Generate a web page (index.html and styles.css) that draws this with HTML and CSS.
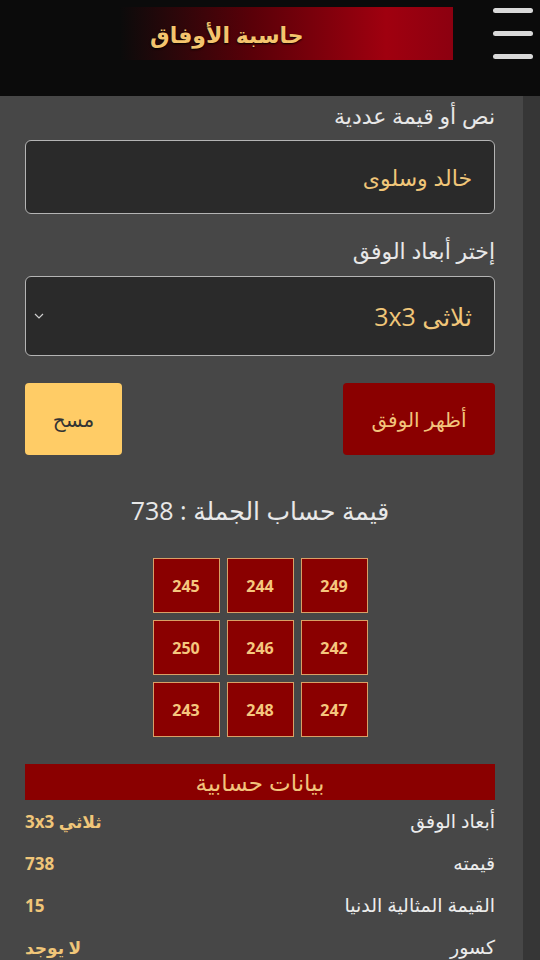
FILE: index.html
```html
<!DOCTYPE html>
<html lang="ar" dir="rtl">
<head>
<meta charset="utf-8">
<title>حاسبة الأوفاق</title>
<link rel="stylesheet" href="styles.css">
</head>
<body>
<header class="topbar">
  <div class="menu">
    <span class="bar"></span>
    <span class="bar"></span>
    <span class="bar"></span>
  </div>
  <div class="banner"><h1 class="title">حاسبة الأوفاق</h1></div>
</header>
<div class="page">
  <div class="track"></div>
  <main class="content">
    <label class="label">نص أو قيمة عددية</label>
    <div class="field">خالد وسلوى</div>
    <label class="label label-2">إختر أبعاد الوفق</label>
    <div class="field select">
      <span>ثلاثى 3x3</span>
      <svg class="chev" width="10" height="6" viewBox="0 0 10 6"><path d="M1 1 L5 5 L9 1" fill="none" stroke="#cfcfcf" stroke-width="1.2"/></svg>
    </div>
    <div class="actions">
      <button class="btn btn-show">أظهر الوفق</button>
      <button class="btn btn-clear">مسح</button>
    </div>
    <p class="sum">قيمة حساب الجملة : 738</p>
    <div class="grid">
      <div class="cell">249</div><div class="cell">244</div><div class="cell">245</div>
      <div class="cell">242</div><div class="cell">246</div><div class="cell">250</div>
      <div class="cell">247</div><div class="cell">248</div><div class="cell">243</div>
    </div>
    <h2 class="section">بيانات حسابية</h2>
    <div class="row"><span class="k">أبعاد الوفق</span><span class="v">ثلاثي 3x3</span></div>
    <div class="row"><span class="k">قيمته</span><span class="v">738</span></div>
    <div class="row"><span class="k">القيمة المثالية الدنيا</span><span class="v">15</span></div>
    <div class="row"><span class="k">كسور</span><span class="v">لا يوجد</span></div>
  </main>
</div>
</body>
</html>
```
FILE: styles.css
```css
* { box-sizing: border-box; }
html, body { margin: 0; padding: 0; }
body {
  background: #474747;
  font-family: "Open Sans", "DejaVu Sans", sans-serif;
  color: #e6e6e6;
  overflow: hidden;
}
.topbar {
  height: 96px;
  background: #0b0b0b;
  display: flex;
  align-items: flex-start;
  padding-top: 7px;
}
.menu {
  width: 40px;
  margin-right: 7px;
  margin-left: 40px;
  display: flex;
  flex-direction: column;
  gap: 18px;
  padding-top: 1px;
}
.bar {
  display: block;
  height: 5px;
  border-radius: 3px;
  background: #d9d9d9;
}
.banner {
  width: 333px;
  height: 53px;
  background: linear-gradient(to left, #8c0010 0%, #a0000f 20%, #5a0008 60%, #0b0b0b 100%);
  display: flex;
  align-items: center;
  justify-content: flex-end;
  padding-left: 30px;
}
.title {
  margin: 0;
  font-size: 22px;
  font-weight: bold;
  color: #f4c46e;
  text-shadow: 0 1px 2px #000;
}
.page {
  display: flex;
  min-height: 864px;
}
.track {
  width: 17px;
  background: #363636;
  flex: none;
}
.content {
  flex: 1;
  padding: 6px 28px 0 25px;
}
.label {
  display: block;
  font-size: 22px;
  line-height: 26px;
  color: #e8e8e8;
}
.label-2 { margin-top: 23px; }
.field {
  margin-top: 12px;
  height: 74px;
  background: #2a2a2a;
  border: 1px solid #b4b4b4;
  border-radius: 6px;
  display: flex;
  align-items: center;
  padding: 0 22px;
  font-size: 22px;
  color: #f0c679;
}
.select {
  margin-top: 13px;
  height: 80px;
  justify-content: space-between;
  padding-left: 8px;
  font-size: 25px;
}
.chev { flex: none; }
.actions {
  margin-top: 27px;
  display: flex;
  justify-content: space-between;
}
.btn {
  height: 72px;
  border: none;
  border-radius: 4px;
  font-family: inherit;
  font-size: 20px;
}
.btn-show {
  width: 152px;
  background: #8a0000;
  color: #f2c47c;
}
.btn-clear {
  width: 97px;
  background: #ffcc66;
  color: #333;
}
.sum {
  margin: 40px 0 0;
  text-align: center;
  font-size: 25px;
  line-height: 30px;
  color: #e8e8e8;
}
.grid {
  margin: 33px auto 0;
  display: grid;
  grid-template-columns: repeat(3, 67px);
  grid-auto-rows: 55px;
  gap: 7px;
  width: max-content;
}
.cell {
  background: #8a0000;
  border: 1px solid #d9a066;
  display: flex;
  align-items: center;
  justify-content: center;
  font-weight: bold;
  font-size: 16px;
  color: #f5c77e;
}
.section {
  margin: 27px 0 0;
  height: 36px;
  background: #8a0000;
  text-align: center;
  font-weight: normal;
  font-size: 23px;
  line-height: 36px;
  color: #f2c47c;
}
.row {
  height: 42px;
  display: flex;
  justify-content: space-between;
  align-items: center;
}
.k {
  font-size: 19px;
  color: #ececec;
}
.v {
  font-size: 17px;
  font-weight: bold;
  color: #f0c679;
}
```
